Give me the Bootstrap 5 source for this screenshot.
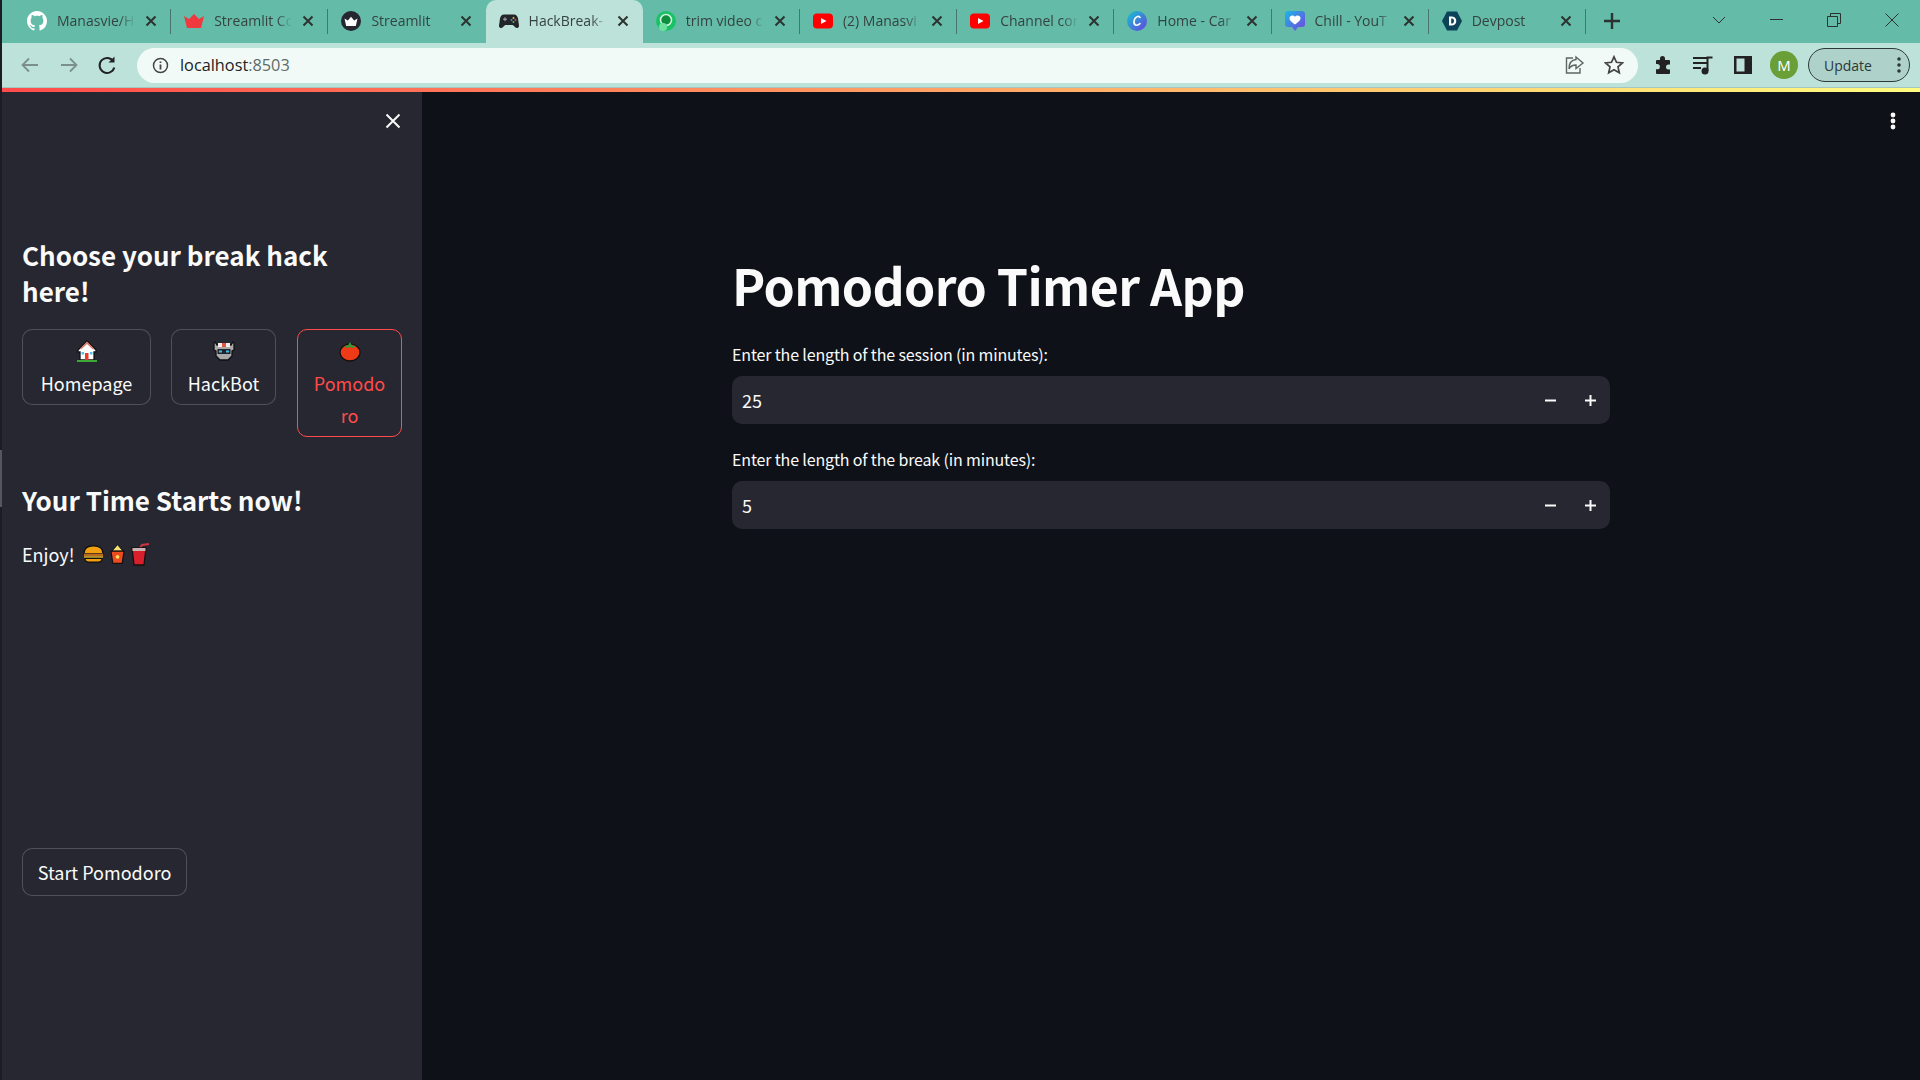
<!DOCTYPE html>
<html lang="en">
<head>
<meta charset="utf-8">
<title>HackBreak - Pomodoro</title>
<link href="https://cdn.jsdelivr.net/npm/bootstrap@5.3.0/dist/css/bootstrap.min.css" rel="stylesheet">
<style>
html,body{height:100%;overflow:hidden;}
body{background:#1c1d22;padding-left:2px;font-family:"Noto Sans CJK SC","Noto Sans",sans-serif;color:#fafafa;display:flex;flex-direction:column;}
.chrome-ui{font-family:"Open Sans","Noto Sans",sans-serif;}
.tabstrip{height:43px;background:#63bba8;padding-left:12px;}
.tabitem{width:157.2px;height:43px;padding:0 14px 2px 13px;gap:10px;color:#36423f;font-size:14px;flex:none;}
.tabitem.sep::after{content:"";position:absolute;right:0;top:9px;height:25px;width:1px;background:#47776c;}
.tabitem.current{background:#bde2da;border-radius:10px 10px 0 0;}
.tabname{flex:1;overflow:hidden;white-space:nowrap;-webkit-mask-image:linear-gradient(90deg,#000 80%,transparent 100%);mask-image:linear-gradient(90deg,#000 80%,transparent 100%);}
.tabx{width:12px;height:12px;flex:none;}
.newtab{margin-left:18px;padding-bottom:2px;}
.winctl{margin-left:auto;gap:44px;padding:0 21px 4px 0;}
.toolstrip{height:45px;background:#bde2da;padding:0 10px 0 17px;border-bottom:1px solid #a5c7c0;}
.navset{gap:17px;margin-right:20px;}
.omnibox{height:35px;width:1503px;background:#f1faf6;border-radius:18px;padding:0 14px 0 15px;color:#222;font-size:16.3px;}
.omnibox .porttxt{color:#5f6b68;}
.omnitext{margin-left:11px;}
.omniend{gap:19px;margin-left:auto;}
.toolicons{gap:19px;margin-left:15px;}
.avatar{width:28px;height:28px;margin-left:-2px;border-radius:50%;background:#6a9e37;color:#fff;font-size:15px;}
.updatepill{width:102px;height:34px;margin-left:-9px;border:1.5px solid #2f3a38;border-radius:17px;background:#aed1ca;font-size:14px;color:#2b3836;padding:0 8px 0 15px;}
.rainbow{height:4px;background:linear-gradient(90deg,#ff4b4b,#fffd80);flex:none;}
.appshell{flex:1;min-height:0;}
.sidepane{width:420px;flex:none;background:#262730;padding:0 20px;position:relative;}
.closerow{height:145px;padding:20px 0 0 0;}
.sidehead{font-size:26px;line-height:36px;font-weight:600;margin:0 0 20px;padding-right:40px;color:#fafafa;}
.btnrow{gap:20px;margin-bottom:45px;}
.stbtn{--bs-btn-color:#fafafa;--bs-btn-bg:#262730;--bs-btn-border-color:rgba(250,250,250,.2);--bs-btn-hover-color:#ff4b4b;--bs-btn-hover-bg:#262730;--bs-btn-hover-border-color:#ff4b4b;--bs-btn-border-radius:10px;font-size:18px;line-height:32px;padding:5px 14px;flex:none;}
.stbtn svg{display:block;margin:0 auto;}
.btnicon{height:32px;padding-top:5px;}
.w-home{width:129px;}
.w-side{width:105px;word-break:break-all;}
.stbtn.chosen{color:#ff4b4b;border-color:#ff4b4b;margin-left:1px;}
.subhead{font-size:26px;line-height:36px;font-weight:600;margin:0 0 20px;}
.enjoyline{font-size:18px;line-height:32px;gap:8px;}
.enjoyicons{gap:6px;}
.startwrap{margin-top:278px;}
.startbtn{width:165px;height:48px;padding:0;white-space:nowrap;}
.mainpane{flex:1;background:#0e1117;position:relative;}
.kebab{position:absolute;right:24px;top:20px;}
.mainwrap{width:878px;margin:0 auto;padding-top:156px;}
.apptitle{font-size:50px;line-height:72px;font-weight:700;letter-spacing:-.6px;margin:0 0 22px;color:#fafafa;}
.fieldlabel{font-size:16px;line-height:24px;letter-spacing:-.15px;margin-bottom:10px;color:#fafafa;}
.numfield{height:48px;background:#262730;border-radius:10px;padding:0 14px 0 10px;font-size:18px;margin-bottom:23px;}
.steppers{gap:29px;margin-left:auto;}
.handle{position:absolute;left:-2px;top:358px;width:2px;height:57px;background:#55565e;}
</style>
</head>
<body>
<header class="chrome-ui flex-none">
  <div class="tabstrip d-flex">
    <div class="tabitem sep d-flex align-items-center position-relative">
      <svg width="20" height="20" viewBox="0 0 16 16" fill="#fff"><path d="M8 0C3.58 0 0 3.58 0 8c0 3.54 2.29 6.53 5.47 7.59.4.07.55-.17.55-.38 0-.19-.01-.82-.01-1.49-2.01.37-2.53-.49-2.69-.94-.09-.23-.48-.94-.82-1.13-.28-.15-.68-.52-.01-.53.63-.01 1.08.58 1.23.82.72 1.21 1.87.87 2.33.66.07-.52.28-.87.51-1.07-1.78-.2-3.64-.89-3.64-3.95 0-.87.31-1.59.82-2.15-.08-.2-.36-1.02.08-2.12 0 0 .67-.21 2.2.82.64-.18 1.32-.27 2-.27.68 0 1.36.09 2 .27 1.53-1.04 2.2-.82 2.2-.82.44 1.1.16 1.92.08 2.12.51.56.82 1.27.82 2.15 0 3.07-1.87 3.75-3.65 3.95.29.25.54.73.54 1.48 0 1.07-.01 1.93-.01 2.2 0 .21.15.46.55.38A8.013 8.013 0 0016 8c0-4.42-3.58-8-8-8z"/></svg>
      <span class="tabname">Manasvie/H</span>
      <svg class="tabx" viewBox="0 0 12 12" stroke="#2c3331" stroke-width="2"><path d="M1.5 1.5l9 9M10.5 1.5l-9 9"/></svg>
    </div>
    <div class="tabitem sep d-flex align-items-center position-relative">
      <svg width="20" height="20" viewBox="0 0 20 20" fill="#f0393f"><path d="M0 5l5 3 5-5 5 5 5-3-3 12H3z"/></svg>
      <span class="tabname">Streamlit Cc</span>
      <svg class="tabx" viewBox="0 0 12 12" stroke="#2c3331" stroke-width="2"><path d="M1.5 1.5l9 9M10.5 1.5l-9 9"/></svg>
    </div>
    <div class="tabitem d-flex align-items-center position-relative">
      <svg width="20" height="20" viewBox="0 0 20 20"><circle cx="10" cy="10" r="10" fill="#262730"/><path d="M3.5 7.5l3.3 2 3.2-3.7 3.2 3.7 3.3-2-1.7 7.5H5.2z" fill="#fff"/></svg>
      <span class="tabname">Streamlit</span>
      <svg class="tabx" viewBox="0 0 12 12" stroke="#2c3331" stroke-width="2"><path d="M1.5 1.5l9 9M10.5 1.5l-9 9"/></svg>
    </div>
    <div class="tabitem current d-flex align-items-center position-relative">
      <svg width="20" height="20" viewBox="0 0 20 20"><path d="M5 3.5h10c2.3 0 3.6 1.7 4 4l1 7c.3 2.3-2.6 3.3-4 1.6L13.8 14H6.2L4 16.100c-1.4 1.7-4.3.7-4-1.600l1-7c.4-2.300 1.700-4 4-4z" fill="#22262a"/><circle cx="14.500" cy="7" r="1" fill="#e6c33b"/><circle cx="16.500" cy="9" r="1" fill="#d84a4a"/><circle cx="12.500" cy="9" r="1" fill="#4a90d8"/><circle cx="14.500" cy="11" r="1" fill="#58b55f"/><path d="M4 8.200h4M6 6.200v4" stroke="#aaa" stroke-width="1"/></svg>
      <span class="tabname">HackBreak-</span>
      <svg class="tabx" viewBox="0 0 12 12" stroke="#2c3331" stroke-width="2"><path d="M1.500 1.500l9 9M10.500 1.500l-9 9"/></svg>
    </div>
    <div class="tabitem sep d-flex align-items-center position-relative">
      <svg width="20" height="20" viewBox="0 0 20 20"><circle cx="10" cy="10" r="10" fill="#19c266"/><circle cx="10" cy="9" r="5.500" fill="#0e8f3f" stroke="#d6f7df" stroke-width="1.500"/><circle cx="7" cy="16" r="4" fill="#6de0a0"/></svg>
      <span class="tabname">trim video c</span>
      <svg class="tabx" viewBox="0 0 12 12" stroke="#2c3331" stroke-width="2"><path d="M1.500 1.500l9 9M10.500 1.500l-9 9"/></svg>
    </div>
    <div class="tabitem sep d-flex align-items-center position-relative">
      <svg width="20" height="20" viewBox="0 0 20 20"><rect y="2.500" width="20" height="15" rx="4" fill="#f00"/><path d="M8 7l5.500 3L8 13z" fill="#fff"/></svg>
      <span class="tabname">(2) Manasvi</span>
      <svg class="tabx" viewBox="0 0 12 12" stroke="#2c3331" stroke-width="2"><path d="M1.500 1.500l9 9M10.500 1.500l-9 9"/></svg>
    </div>
    <div class="tabitem sep d-flex align-items-center position-relative">
      <svg width="20" height="20" viewBox="0 0 20 20"><rect y="2.500" width="20" height="15" rx="4" fill="#f00"/><path d="M8 7l5.500 3L8 13z" fill="#fff"/></svg>
      <span class="tabname">Channel cor</span>
      <svg class="tabx" viewBox="0 0 12 12" stroke="#2c3331" stroke-width="2"><path d="M1.500 1.500l9 9M10.500 1.500l-9 9"/></svg>
    </div>
    <div class="tabitem sep d-flex align-items-center position-relative">
      <svg width="20" height="20" viewBox="0 0 20 20"><defs><linearGradient id="cv" x1="0" y1="0" x2="1" y2="1"><stop offset="0" stop-color="#10c8d0"/><stop offset="1" stop-color="#6a3fe0"/></linearGradient></defs><circle cx="10" cy="10" r="10" fill="url(#cv)"/><path d="M13 6.500c-1-2-5.500-1-6 4-.4 4 3.500 5 6 2" fill="none" stroke="#fff" stroke-width="1.600" stroke-linecap="round"/></svg>
      <span class="tabname">Home - Car</span>
      <svg class="tabx" viewBox="0 0 12 12" stroke="#2c3331" stroke-width="2"><path d="M1.500 1.500l9 9M10.500 1.500l-9 9"/></svg>
    </div>
    <div class="tabitem sep d-flex align-items-center position-relative">
      <svg width="20" height="20" viewBox="0 0 20 20"><defs><linearGradient id="ch" x1="0" y1="0" x2="1" y2="1"><stop offset="0" stop-color="#19b9e6"/><stop offset="1" stop-color="#7a3fe0"/></linearGradient></defs><path d="M3 0h14a3 3 0 013 3v10a3 3 0 01-3 3h-4l-3 4-3-4H3a3 3 0 01-3-3V3a3 3 0 013-3z" fill="url(#ch)"/><path d="M10 13.500C6 10.500 4.500 9 4.500 7c0-2.600 3.700-3.500 5.500-1.200C11.800 3.500 15.500 4.400 15.500 7c0 2-1.500 3.500-5.500 6.500z" fill="#fff"/></svg>
      <span class="tabname">Chill - YouT</span>
      <svg class="tabx" viewBox="0 0 12 12" stroke="#2c3331" stroke-width="2"><path d="M1.500 1.500l9 9M10.500 1.500l-9 9"/></svg>
    </div>
    <div class="tabitem sep d-flex align-items-center position-relative">
      <svg width="20" height="20" viewBox="0 0 20 20"><path d="M5 .5h10l5 9.500-5 9.500H5L0 10z" fill="#0d4358"/><path d="M7 5.500h3.200c5.400 0 5.400 9 0 9H7z" fill="#fff"/><path d="M9.200 7.500h1c2.300 0 2.300 5 0 5h-1z" fill="#0d4358"/></svg>
      <span class="tabname">Devpost</span>
      <svg class="tabx" viewBox="0 0 12 12" stroke="#2c3331" stroke-width="2"><path d="M1.500 1.500l9 9M10.500 1.500l-9 9"/></svg>
    </div>
    <div class="newtab d-flex align-items-center"><svg width="16" height="16" viewBox="0 0 16 16" stroke="#2a3331" stroke-width="2.400"><path d="M8 0v16M0 8h16"/></svg></div>
    <div class="winctl d-flex align-items-center">
      <svg width="14" height="8" viewBox="0 0 14 8" fill="none" stroke="#2a3331"><path d="M1 1l6 6 6-6"/></svg>
      <svg width="13" height="1" viewBox="0 0 13 1" stroke="#2a3331"><path d="M0 .5h13"/></svg>
      <svg width="14" height="14" viewBox="0 0 14 14" fill="none" stroke="#2a3331"><path d="M.5 3.500h10v10H.5zM3.500 3.500v-3h10v10h-3"/></svg>
      <svg width="14" height="14" viewBox="0 0 14 14" stroke="#2a3331"><path d="M.5.500l13 13M13.500.500l-13 13"/></svg>
    </div>
  </div>
  <div class="toolstrip d-flex align-items-center">
    <div class="navset d-flex align-items-center">
      <svg width="22" height="22" viewBox="0 0 22 22" fill="none" stroke="#7d8f8b" stroke-width="1.800"><path d="M19 11H4M10 4.500L3.500 11l6.500 6.500"/></svg>
      <svg width="22" height="22" viewBox="0 0 22 22" fill="none" stroke="#7d8f8b" stroke-width="1.800"><path d="M3 11h15M12 4.500l6.500 6.500-6.500 6.500"/></svg>
      <svg width="20" height="20" viewBox="0 0 20 20" fill="none" stroke="#222" stroke-width="2"><path d="M16.500 6.500a7.500 7.500 0 10.800 6"/><path d="M17.500 1.500v6h-6" fill="#222" stroke="none"/></svg>
    </div>
    <div class="omnibox d-flex align-items-center">
      <svg width="17" height="17" viewBox="0 0 17 17" fill="none" stroke="#444"><circle cx="8.500" cy="8.500" r="7" stroke-width="1.500"/><path d="M8.500 7.500v5M8.500 4.500v1.600" stroke-width="1.800"/></svg>
      <span class="omnitext">localhost<span class="porttxt">:8503</span></span>
      <div class="omniend d-flex align-items-center">
        <svg width="20" height="20" viewBox="0 0 20 20" fill="none" stroke="#5d6664" stroke-width="1.400"><path d="M8 3H1.500v15H15v-5M11 2l7 6-7 5.500V10C7 10 5 12 4 14c0-5 2-9 7-9.500z"/></svg>
        <svg width="20" height="20" viewBox="0 0 20 20" fill="none" stroke="#444" stroke-width="1.700"><path d="M10 1.800l2.500 5.500 6 .6-4.500 4 1.300 5.900L10 14.800l-5.300 3 1.300-5.900-4.500-4 6-.6z"/></svg>
      </div>
    </div>
    <div class="toolicons d-flex align-items-center">
      <svg width="20" height="20" viewBox="0 0 20 20" fill="#222"><path d="M7 3.500a2.500 2.500 0 015 0V5h4a1 1 0 011 1v3.500h-1.500a2.500 2.500 0 000 5H17V18a1 1 0 01-1 1H4a1 1 0 01-1-1v-3.700h1.200a2.600 2.600 0 000-5.300H3V6a1 1 0 011-1h3z"/></svg>
      <svg width="22" height="22" viewBox="0 0 22 22" fill="none" stroke="#222" stroke-width="2"><path d="M1 4h14M1 9h14M1 14h8"/><path d="M15.500 17V3.500h5"/><circle cx="13" cy="17" r="2.500" fill="#222"/></svg>
      <svg width="20" height="20" viewBox="0 0 20 20"><path d="M1 1h18v18H1z" fill="#222"/><path d="M3.500 3.500h8v13h-8z" fill="#bde2da"/></svg>
      <div class="avatar d-flex align-items-center justify-content-center">M</div>
      <div class="updatepill d-flex align-items-center justify-content-between"><span>Update</span><svg width="4" height="16" viewBox="0 0 4 16" fill="#2b3836"><circle cx="2" cy="2" r="1.800"/><circle cx="2" cy="8" r="1.800"/><circle cx="2" cy="14" r="1.800"/></svg></div>
    </div>
  </div>
  <div class="rainbow"></div>
</header>
<div class="appshell d-flex">
  <aside class="sidepane d-flex flex-column">
    <div class="handle"></div>
    <div class="closerow d-flex justify-content-end"><svg width="18" height="18" viewBox="0 0 18 18" stroke="#fafafa" stroke-width="2"><path d="M2.500 2.500l13 13M15.500 2.500l-13 13"/></svg></div>
    <h2 class="sidehead">Choose your break hack here!</h2>
    <div class="btnrow d-flex align-items-start">
      <button type="button" class="btn stbtn w-home">
        <span class="btnicon d-block"><svg width="20" height="22" viewBox="0 0 20 22"><path d="M10 1L1 10v2h2v8h14v-8h2v-2z" fill="#fff" stroke="#111" stroke-width="1.300"/><path d="M3 8.500L10 1.500l7 7-1 1-6-5.500-6 5.500z" fill="#d97a6a"/><path d="M8 13h3.500v7H8z" fill="#ec3b2a"/><path d="M13 12h2.500v2.500H13zM4.500 12H7v2.500H4.500z" fill="#4fc3ef"/><path d="M0 20h20v2H0z" fill="#3aaa35"/></svg></span>
        Homepage
      </button>
      <button type="button" class="btn stbtn w-side">
        <span class="btnicon d-block"><svg width="22" height="22" viewBox="0 0 22 22"><path d="M1 3l1-1 2 3h14l2-3 1 1v7l-2 1v5l-4 4H7l-4-4v-5l-2-1z" fill="#aaa" stroke="#111" stroke-width="1.300"/><path d="M5 3h12v4H5z" fill="#eee"/><path d="M9 3h4v4H9z" fill="#e2543c"/><path d="M4.500 9h13v5h-13z" fill="#20242a"/><path d="M6 10.500h3v2H6zM13 10.500h3v2h-3z" fill="#3fc0e8"/></svg></span>
        HackBot
      </button>
      <button type="button" class="btn stbtn w-side chosen">
        <span class="btnicon d-block"><svg width="22" height="22" viewBox="0 0 22 22"><ellipse cx="11" cy="12.500" rx="10" ry="8.500" fill="#ee3a17" stroke="#111" stroke-width="1.300"/><path d="M5 6l4-.5L11 2l2 3.500 4 .5-3 2-3-1-3 1z" fill="#2f9b3a"/></svg></span>
        Pomodoro
      </button>
    </div>
    <h2 class="subhead">Your Time Starts now!</h2>
    <div class="enjoyline d-flex align-items-center">
      <span>Enjoy!</span>
      <span class="enjoyicons d-flex align-items-center">
        <svg width="21" height="19" viewBox="0 0 22 20"><path d="M1 9C1 3 6 1 11 1s10 2 10 8z" fill="#f0a010" stroke="#111" stroke-width="1.300"/><path d="M1 9h20v3H1z" fill="#b96a1d"/><path d="M1 12h20v1.500H1z" fill="#e8c83a"/><path d="M2 14h18c0 3-2 4-4 4H6c-2 0-4-1-4-4z" fill="#f0a010" stroke="#111" stroke-width="1.300"/></svg>
        <svg width="15" height="22" viewBox="0 0 16 22"><path d="M2 8L8 1l6 7z" fill="#f7e27a" stroke="#111" stroke-width="1"/><path d="M1 8h14l-2 13H3z" fill="#ec4a1f" stroke="#111" stroke-width="1.300"/><circle cx="8" cy="14" r="2" fill="#ffd95a"/></svg>
        <svg width="19" height="23" viewBox="0 0 19 23"><path d="M9 5l2-3 7-1" fill="none" stroke="#d1343f" stroke-width="2"/><path d="M1 5h14l-2 17H3z" fill="#d81f2c" stroke="#111" stroke-width="1.300"/><path d="M1.500 5h13v3h-13z" fill="#c9b3b3"/></svg>
      </span>
    </div>
    <div class="startwrap"><button type="button" class="btn stbtn startbtn">Start Pomodoro</button></div>
  </aside>
  <main class="mainpane">
    <svg class="kebab" width="6" height="18" viewBox="0 0 6 18" fill="#fafafa"><circle cx="3" cy="3" r="2.400"/><circle cx="3" cy="9" r="2.400"/><circle cx="3" cy="15" r="2.400"/></svg>
    <div class="mainwrap">
      <h1 class="apptitle">Pomodoro Timer App</h1>
      <div class="fieldlabel">Enter the length of the session (in minutes):</div>
      <div class="numfield d-flex align-items-center">
        <span>25</span>
        <span class="steppers d-flex align-items-center">
          <svg width="11" height="11" viewBox="0 0 11 11" stroke="#fafafa" stroke-width="2"><path d="M0 5.500h11"/></svg>
          <svg width="11" height="11" viewBox="0 0 11 11" stroke="#fafafa" stroke-width="2"><path d="M0 5.500h11M5.500 0v11"/></svg>
        </span>
      </div>
      <div class="fieldlabel">Enter the length of the break (in minutes):</div>
      <div class="numfield d-flex align-items-center">
        <span>5</span>
        <span class="steppers d-flex align-items-center">
          <svg width="11" height="11" viewBox="0 0 11 11" stroke="#fafafa" stroke-width="2"><path d="M0 5.500h11"/></svg>
          <svg width="11" height="11" viewBox="0 0 11 11" stroke="#fafafa" stroke-width="2"><path d="M0 5.500h11M5.500 0v11"/></svg>
        </span>
      </div>
    </div>
  </main>
</div>
<script src="https://cdn.jsdelivr.net/npm/bootstrap@5.3.0/dist/js/bootstrap.bundle.min.js"></script>
</body>
</html>
